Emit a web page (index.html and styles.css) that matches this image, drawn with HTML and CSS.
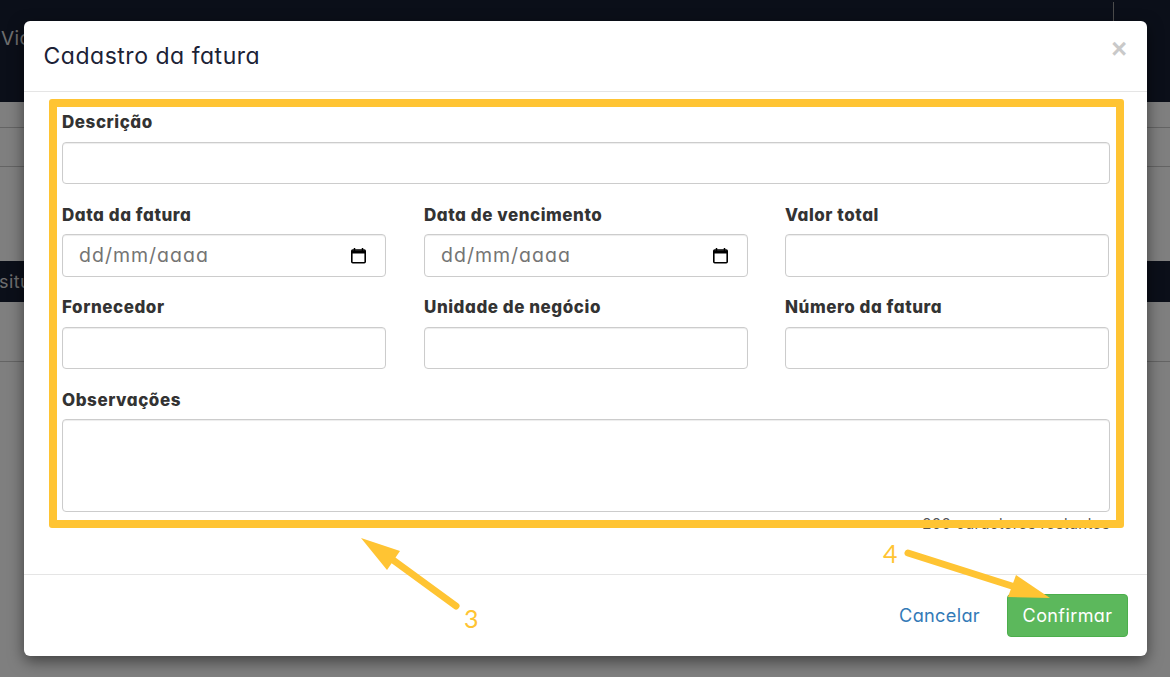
FILE: index.html
```html
<!DOCTYPE html>
<html lang="pt-BR">
<head>
<meta charset="utf-8">
<title>Cadastro da fatura</title>
<link rel="stylesheet" href="styles.css">
</head>
<body>
<div class="page">
  <header class="nav"><span class="nav-text">Vic</span><span class="nav-sep"></span></header>
  <div class="row row-a"></div>
  <div class="row row-b"></div>
  <div class="strip"><span class="strip-text">situ</span></div>
  <div class="row row-c"></div>
</div>
<div class="backdrop"></div>
<section class="modal">
  <header class="modal-head">
    <h1 class="modal-title">Cadastro da fatura</h1>
    <span class="close">×</span>
  </header>
  <form class="modal-body">
    <div class="field">
      <label class="label">Descrição</label>
      <div class="input"></div>
    </div>
    <div class="grid">
      <div class="field">
        <label class="label">Data da fatura</label>
        <div class="input date"><span class="date-text">dd/mm/aaaa</span>
          <svg class="cal" viewBox="0 0 15 16" width="15" height="16"><path d="M3.5 0v3M11.5 0v3" stroke="#000" stroke-width="1.5" fill="none"/><rect x=".8" y="2" width="13.4" height="12.7" rx="1" fill="none" stroke="#000" stroke-width="1.6"/><path d="M.8 4h13.4" stroke="#000" stroke-width="3"/></svg>
        </div>
      </div>
      <div class="field">
        <label class="label">Data de vencimento</label>
        <div class="input date"><span class="date-text">dd/mm/aaaa</span>
          <svg class="cal" viewBox="0 0 15 16" width="15" height="16"><path d="M3.5 0v3M11.5 0v3" stroke="#000" stroke-width="1.5" fill="none"/><rect x=".8" y="2" width="13.4" height="12.7" rx="1" fill="none" stroke="#000" stroke-width="1.6"/><path d="M.8 4h13.4" stroke="#000" stroke-width="3"/></svg>
        </div>
      </div>
      <div class="field">
        <label class="label">Valor total</label>
        <div class="input"></div>
      </div>
      <div class="field">
        <label class="label">Fornecedor</label>
        <div class="input"></div>
      </div>
      <div class="field">
        <label class="label">Unidade de negócio</label>
        <div class="input"></div>
      </div>
      <div class="field">
        <label class="label">Número da fatura</label>
        <div class="input"></div>
      </div>
    </div>
    <div class="field notes">
      <label class="label">Observações</label>
      <div class="input area"></div>
      <div class="counter">200 caracteres restantes</div>
    </div>
  </form>
  <footer class="modal-foot">
    <a class="cancel">Cancelar</a>
    <button class="confirm" type="button">Confirmar</button>
  </footer>
</section>
<div class="mark"></div>
<svg class="arrows" width="1170" height="677" viewBox="0 0 1170 677">
  <path d="M456 606 393 560" stroke="#ffc433" stroke-width="7" stroke-linecap="round" fill="none"/>
  <path d="M361 538 400 551 387 570Z" fill="#ffc433"/>
  <path d="M908 553 1015 587" stroke="#ffc433" stroke-width="7" stroke-linecap="round" fill="none"/>
  <path d="M1050 598 1016 575 1008 597Z" fill="#ffc433"/>
</svg>
<span class="num num-3">3</span>
<span class="num num-4">4</span>
</body>
</html>
```
FILE: styles.css
```css
* { box-sizing: border-box; }
html, body { margin: 0; height: 100%; }
body {
  position: relative;
  width: 1170px;
  height: 677px;
  overflow: hidden;
  background: #fff;
  font-family: Inter, "Noto Sans", "Liberation Sans", sans-serif;
  font-feature-settings: "cv11";
  color: #333;
}
.page { display: flex; flex-direction: column; }
.nav {
  height: 102px;
  background: #161e33;
  display: flex;
  align-items: flex-start;
  justify-content: space-between;
  color: #ddd;
  flex-shrink: 0;
}
.nav-text { font-size: 19px; margin: 27px 0 0 1px; letter-spacing: .4px; }
.nav-sep { width: 1px; height: 40px; margin: 2px 56px 0 0; background: #999; }
.row { border-bottom: 1px solid #c8c8c8; flex-shrink: 0; }
.row-a { height: 26px; }
.row-b { height: 39px; margin-bottom: 94px; }
.strip {
  height: 41px;
  background: #161e33;
  color: #ddd;
  display: flex;
  align-items: center;
  flex-shrink: 0;
}
.strip-text { font-size: 18px; margin: 0 0 0 -1px; letter-spacing: .4px; }
.row-c { height: 60px; }
.backdrop {
  position: absolute;
  inset: 0;
  background: rgba(0, 0, 0, .5);
}
.modal {
  position: absolute;
  left: 24px;
  top: 21px;
  width: 1123px;
  height: 635px;
  background: #fff;
  border-radius: 6px;
  box-shadow: 0 5px 15px rgba(0, 0, 0, .5);
  display: flex;
  flex-direction: column;
}
.modal-head {
  height: 71px;
  flex-shrink: 0;
  border-bottom: 1px solid #e5e5e5;
  padding: 0 20px 0 19.5px;
  display: flex;
  align-items: center;
  justify-content: space-between;
}
.modal-title {
  margin: 0;
  font-size: 23px;
  font-weight: 400;
  letter-spacing: .52px;
  color: #1c2236;
}
.close {
  font-family: "Liberation Sans", sans-serif;
  font-size: 27px;
  font-weight: 700;
  line-height: 1;
  color: #c9c9c9;
  margin-top: -14px;
}
.modal-body {
  flex: 1;
  padding: 20px 37px 0 38px;
  display: flex;
  flex-direction: column;
}
.field { display: flex; flex-direction: column; }
.label {
  height: 20px;
  line-height: 20px;
  font-size: 17px;
  font-weight: 800;
  letter-spacing: .55px;
  color: #333;
  margin-bottom: 10px;
}
.input {
  height: 42px;
  border: 1px solid #ccc;
  border-radius: 4px;
  box-shadow: inset 0 1px 1px rgba(0, 0, 0, .075);
  background: #fff;
}
.grid {
  display: grid;
  grid-template-columns: 362px 361px 324px;
  margin-top: 21px;
  row-gap: 20px;
}
.grid .field { width: 324px; }
.grid .label { margin-bottom: 9px; }
.grid .input { height: 43px; }
.grid .field:nth-child(n+4) .input { height: 42px; }
.grid .field:nth-child(n+4) .label { margin-bottom: 10px; }
.date {
  display: flex;
  align-items: center;
  justify-content: space-between;
  padding: 0 19px 0 17px;
}
.date-text { font-size: 19.5px; color: #747474; letter-spacing: 1px; margin: -2px 0 0 -1px; }
.notes { margin-top: 21px; }
.notes .label { margin-bottom: 9px; }
.area { height: 93px; }
.counter {
  text-align: right;
  font-size: 15px;
  line-height: 20px;
  letter-spacing: .35px;
  color: #555;
  margin-top: 2px;
}
.modal-foot {
  height: 82px;
  flex-shrink: 0;
  border-top: 1px solid #e5e5e5;
  padding: 0 19px 0 0;
  display: flex;
  align-items: center;
  justify-content: flex-end;
  gap: 27px;
}
.cancel { color: #337ab7; font-size: 18.2px; letter-spacing: .3px; margin-top: -2px; }
.confirm {
  width: 121px;
  height: 43px;
  border: 1px solid #4cae4c;
  border-radius: 4px;
  background: #5cb85c;
  color: #fff;
  font-family: inherit;
  font-feature-settings: inherit;
  font-size: 18px;
  letter-spacing: .4px;
}
.mark {
  position: absolute;
  left: 49px;
  top: 99px;
  width: 1075px;
  height: 429px;
  border: 8px solid #ffc433;
  border-radius: 3px;
}
.arrows { position: absolute; left: 0; top: 0; }
.num {
  position: absolute;
  font-family: Lato, sans-serif;
  font-weight: 400;
  font-size: 25px;
  line-height: 26px;
  color: #ffc433;
}
.num-3 { left: 464px; top: 605px; }
.num-4 { left: 883px; top: 540px; }
```
